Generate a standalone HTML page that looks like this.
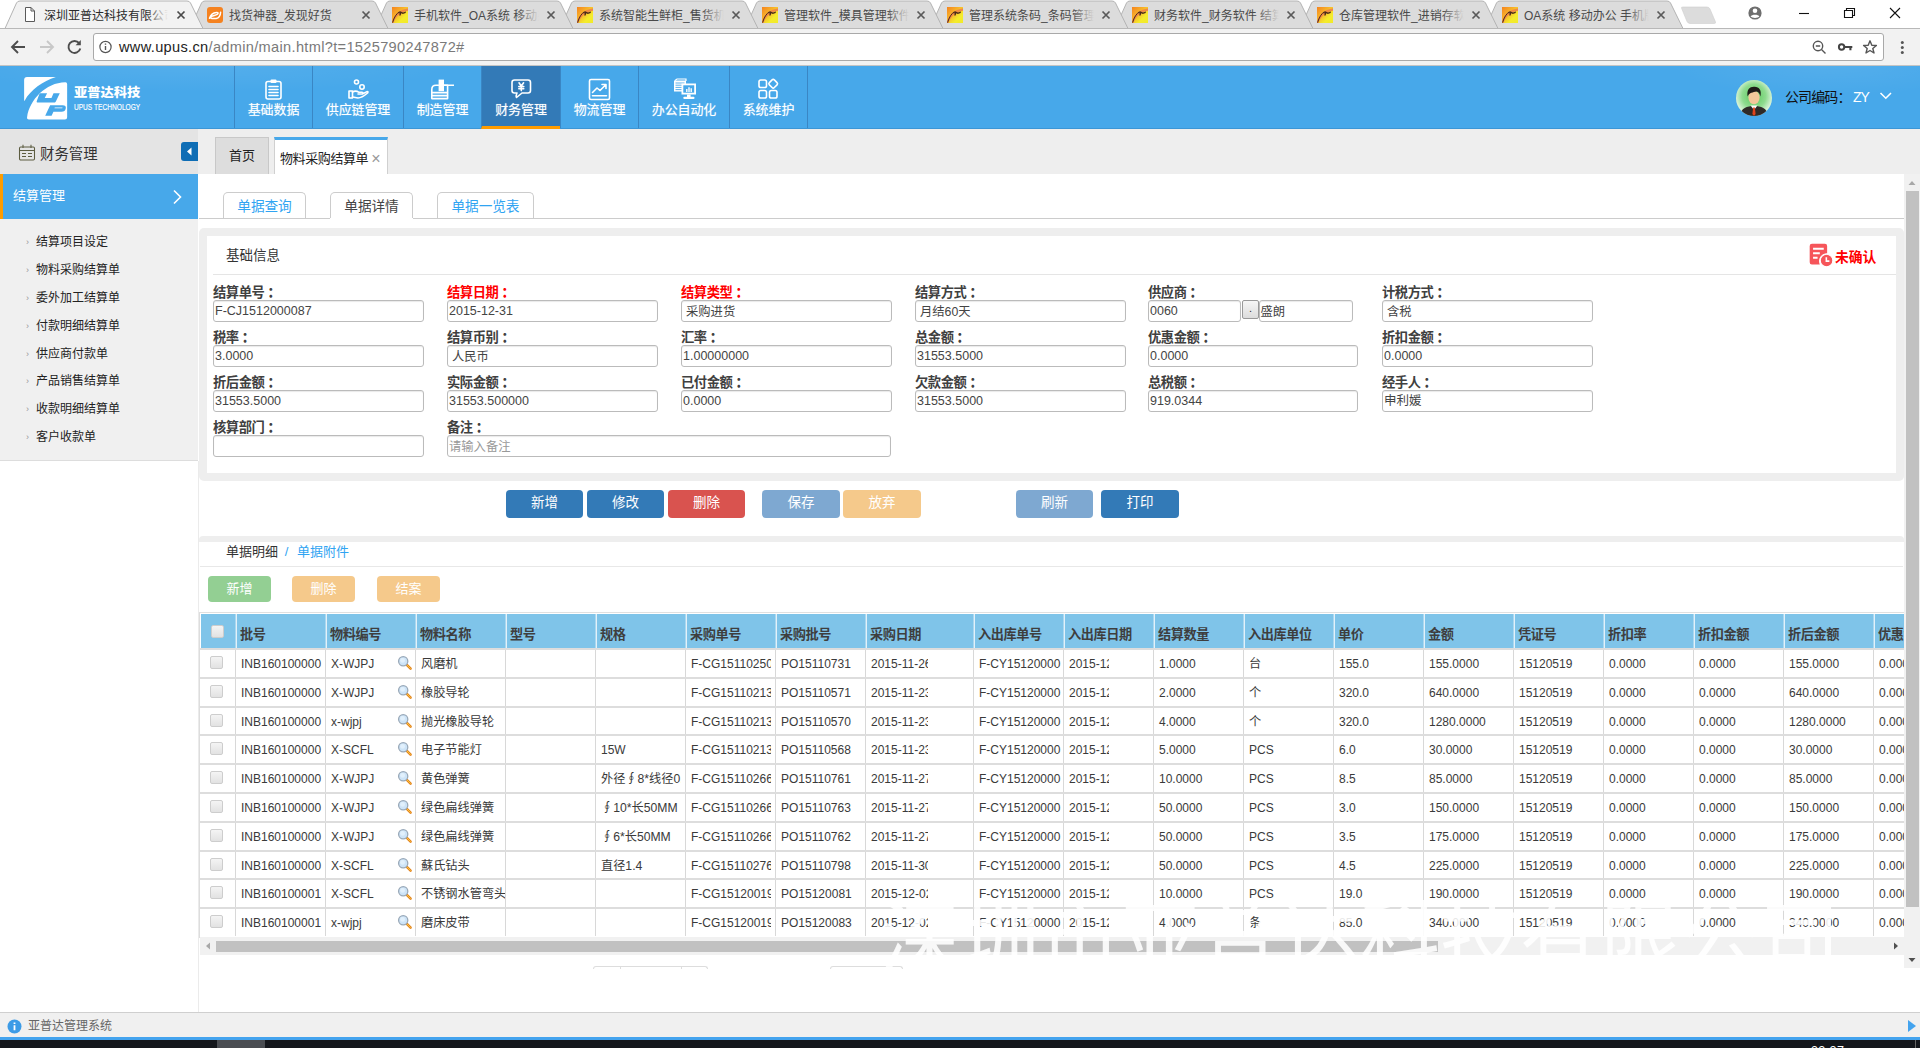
<!DOCTYPE html>
<html lang="zh-CN">
<head>
<meta charset="utf-8">
<title>深圳亚普达科技有限公司</title>
<style>
*{box-sizing:border-box;margin:0;padding:0}
html,body{width:1920px;height:1048px;overflow:hidden;background:#fff}
body{font-family:"Liberation Sans","Noto Sans CJK SC",sans-serif;font-size:12px;color:#333;position:relative}
.abs{position:absolute}
svg{display:block}
/* ---------- browser chrome ---------- */
#tabstrip{position:absolute;left:0;top:0;width:1920px;height:28px;background:#fff}
#tabstrip svg.tabs{position:absolute;left:0;top:0}
.tabt{position:absolute;top:7px;font-size:12px;color:#2b2b2b;white-space:nowrap;overflow:hidden;height:18px;line-height:18px}
.tabt.ina{color:#4a4a4a}
.fade{position:absolute;top:4px;width:22px;height:22px}
#toolbar{position:absolute;left:0;top:28px;width:1920px;height:38px;background:#f2f2f2;border-top:1px solid #b8b8b8;border-bottom:1px solid #c4c4c4}
#omni{position:absolute;left:93px;top:33px;width:1791px;height:28px;background:#fff;border:1px solid #a9a9a9;border-radius:3px}
#url{position:absolute;left:119px;top:37px;font-size:14.6px;line-height:20px;color:#7a7a7a;letter-spacing:.32px}
#url b{font-weight:normal;color:#222}
/* ---------- app header ---------- */
#hdr{position:absolute;left:0;top:66px;width:1920px;height:63px;background:radial-gradient(ellipse 260px 26px at 200px 0,rgba(255,255,255,.07),rgba(255,255,255,0)),radial-gradient(ellipse 160px 30px at 1830px 0,rgba(255,255,255,.07),rgba(255,255,255,0)),#47a8ea;border-bottom:1px solid #3c96d6}
.nav{position:absolute;top:66px;height:62px;border-left:1px solid #3a86c4;color:#fff;font-size:13px;text-align:center;text-shadow:0 0 1px rgba(255,255,255,.55)}
.nav span{position:absolute;left:0;right:0;top:35px;line-height:18px;letter-spacing:-.1px}
.nav svg{position:absolute;left:50%;top:11px;margin-left:-12.5px}
.nav.act{background:#337ab7;border-bottom:3px solid #ff9c00;height:63px}
/* ---------- sidebar ---------- */
#sbhead{position:absolute;left:0;top:129px;width:198px;height:45px;background:#e4e4e4}
#sbhead span{position:absolute;left:40px;top:14.5px;font-size:14.4px;line-height:20px;color:#333}
#collapse{position:absolute;left:181px;top:142px;width:17px;height:19px;background:#0e6db5;border-radius:3px 0 0 3px}
#sbact{position:absolute;left:0;top:174px;width:198px;height:45px;background:#47a8ea;border-left:3px solid #ff9c00;color:#fff;font-size:13px}
#sbact span{position:absolute;left:10px;top:13px;line-height:18px}
#sbmenu{position:absolute;left:0;top:219px;width:198px;height:242px;background:#f0f0f0;border-bottom:1px solid #ddd}
.mi{position:absolute;left:36px;font-size:12px;line-height:16px;margin-top:1px;color:#222;white-space:nowrap}
.mi i{position:absolute;left:-10px;top:0;font-style:normal;color:#999;font-size:9px}
#sbline{position:absolute;left:198px;top:461px;width:1px;height:551px;background:#ebebeb}
/* ---------- page tabs ---------- */
#tabbar{position:absolute;left:198px;top:129px;width:1722px;height:45px;background:#eee}
#tHome{position:absolute;left:215px;top:137px;width:54px;height:37px;background:#ddd;border:1px solid #c8c8c8;border-bottom:none;font-size:13px;text-align:center;line-height:36px;color:#222}
#tAct{position:absolute;left:274px;top:137px;width:114px;height:37px;background:#fff;border:1px solid #d0d0d0;border-top:3px solid #47a8ea;border-bottom:none;font-size:13px;line-height:36px;color:#222;padding-left:5px;white-space:nowrap;letter-spacing:-.4px}
#tAct i{font-style:normal;color:#999;font-size:16px;margin-left:3px;position:relative;top:1px}
.itab{position:absolute;top:192px;height:26px;border:1px solid #ccc;border-bottom:none;border-radius:5px 5px 0 0;font-size:13.7px;line-height:27px;text-align:center;color:#30a4f2;background:#fff;letter-spacing:-.1px}
.itab.on{color:#444;height:26px;box-shadow:0 1px 0 #fff}
#iline{position:absolute;left:199px;top:218px;width:1705px;height:1px;background:#ccc}

/* ---------- form panel ---------- */
#fpanel{position:absolute;left:199px;top:228px;width:1705px;height:253px;background:#eee;border-radius:5px}
#fwhite{position:absolute;left:207px;top:236px;width:1689px;height:237px;background:#fff}
#ftitle{position:absolute;left:226px;top:247px;font-size:13.5px;line-height:18px;color:#333}
#fhr{position:absolute;left:213px;top:274px;width:1683px;height:1px;background:#e5e5e5}
.lb{position:absolute;font-size:13.3px;font-weight:bold;line-height:16px;color:#404040;white-space:nowrap;letter-spacing:-.45px;margin-top:1px}
.lb b{margin-left:3px}
.lb.red{color:#f00}
.in{position:absolute;height:22px;border:1px solid #bbb;border-radius:3px;background:#fff;font-size:12.5px;line-height:20px;padding-left:1px;color:#444;white-space:nowrap;overflow:hidden;box-shadow:inset 0 1px 1px rgba(0,0,0,.09)}
.in.cj{padding-left:4px;font-size:12.3px;line-height:22px}
.in.ph{color:#999;padding-left:1px;font-size:12.3px;line-height:22px}
#unconf{position:absolute;left:1835px;top:248.5px;font-size:13.8px;font-weight:bold;color:#f00;line-height:18px;white-space:nowrap}
.btn{position:absolute;top:490px;width:77px;height:28px;border-radius:4px;color:#fff;font-size:13.5px;text-align:center;line-height:26px}
.sbtn{position:absolute;top:576px;width:63px;height:26px;border-radius:4px;color:#fff;font-size:13px;text-align:center;line-height:25px}
#band{position:absolute;left:199px;top:536px;width:1705px;height:6px;background:#eee;border-radius:4px 4px 0 0}
#dtitle{position:absolute;left:226px;top:543px;font-size:13px;line-height:18px;color:#333;white-space:nowrap}
#dtitle i{font-style:normal;color:#30a4f2}
#dhr{position:absolute;left:200px;top:566px;width:1703px;height:1px;background:#e8e8e8}
#dleft{position:absolute;left:199px;top:541px;width:1px;height:72px;background:#e8e8e8}
/* ---------- grid ---------- */
#grid{position:absolute;left:199px;top:612px;width:1705px;height:326px;overflow:hidden;border-left:1px solid #ddd;border-top:1px solid #e0e0e0;background:#fff}
#gin{position:absolute;left:0;top:1px;width:1800px;height:330px}
#ghead{position:absolute;left:0;top:0;height:34px;width:1800px;background:#7fc4e9}
.th{position:absolute;top:0;height:34px;border-left:1px solid #e2f1fa;box-shadow:-1px 0 0 rgba(255,255,255,.35);font-size:13.2px;font-weight:bold;color:#3e3e3e;line-height:41.2px;padding-left:3px;letter-spacing:-.45px;white-space:nowrap;overflow:hidden}
.tr{position:absolute;left:0;width:1800px;height:28.8px;border-top:2px solid #ddd}
.td{position:absolute;top:0;height:26.8px;border-left:1px solid #d8d8d8;font-size:12px;color:#3a3a3a;line-height:29.6px;padding-left:5px;white-space:nowrap;overflow:hidden}
.td.cj{font-size:12.2px;line-height:29.4px}
.cb{position:absolute;left:11px;width:13px;height:13px;border:1px solid #cdcdcd;border-radius:2px;background:linear-gradient(#f4f4f4,#e2e2e2)}
.mag{position:absolute;left:71px;top:5px}
.clip{display:inline-block;overflow:hidden;height:26px;vertical-align:top}
/* ---------- scrollbars ---------- */
#vsb{position:absolute;left:1904px;top:174px;width:16px;height:794px;background:#f1f1f1}
#vth{position:absolute;left:1906px;top:191px;width:13px;height:716px;background:#c1c1c1}
#hsb{position:absolute;left:200px;top:937px;width:1704px;height:18px;background:#f1f1f1}
#hth{position:absolute;left:216px;top:941px;width:1222px;height:11px;background:#c1c1c1}
/* ---------- status ---------- */
#status{position:absolute;left:0;top:1012px;width:1920px;height:26px;background:#f0f0f0;border-top:1px solid #cfcfcf}
#status span{position:absolute;left:28px;top:5px;font-size:12px;line-height:17px;color:#666}
#bline{position:absolute;left:0;top:1037px;width:1920px;height:3px;background:#43a3ee}
#taskbar{position:absolute;left:0;top:1040px;width:1920px;height:8px;background:#14171c;overflow:hidden}
#wm{position:absolute;left:880px;top:900px;width:1000px;height:69px;overflow:hidden;font-size:80px;line-height:80px;color:rgba(255,255,255,.88);white-space:nowrap;font-weight:400;letter-spacing:0;pointer-events:none}
</style>
</head>
<body>
<div id="tabstrip">
<svg class="tabs" width="1920" height="30" viewBox="0 0 1920 30"><path d="M1485 28.5 L1496.5 3 Q1497.5 1 1500 1 L1667 1 Q1669.5 1 1670.5 3 L1683 28.5 Z" fill="#dcdcdc" stroke="#b4b4b4" stroke-width="1"/><path d="M1300 28.5 L1311.5 3 Q1312.5 1 1315 1 L1482 1 Q1484.5 1 1485.5 3 L1498 28.5 Z" fill="#dcdcdc" stroke="#b4b4b4" stroke-width="1"/><path d="M1115 28.5 L1126.5 3 Q1127.5 1 1130 1 L1297 1 Q1299.5 1 1300.5 3 L1313 28.5 Z" fill="#dcdcdc" stroke="#b4b4b4" stroke-width="1"/><path d="M930 28.5 L941.5 3 Q942.5 1 945 1 L1112 1 Q1114.5 1 1115.5 3 L1128 28.5 Z" fill="#dcdcdc" stroke="#b4b4b4" stroke-width="1"/><path d="M745 28.5 L756.5 3 Q757.5 1 760 1 L927 1 Q929.5 1 930.5 3 L943 28.5 Z" fill="#dcdcdc" stroke="#b4b4b4" stroke-width="1"/><path d="M560 28.5 L571.5 3 Q572.5 1 575 1 L742 1 Q744.5 1 745.5 3 L758 28.5 Z" fill="#dcdcdc" stroke="#b4b4b4" stroke-width="1"/><path d="M375 28.5 L386.5 3 Q387.5 1 390 1 L557 1 Q559.5 1 560.5 3 L573 28.5 Z" fill="#dcdcdc" stroke="#b4b4b4" stroke-width="1"/><path d="M190 28.5 L201.5 3 Q202.5 1 205 1 L372 1 Q374.5 1 375.5 3 L388 28.5 Z" fill="#dcdcdc" stroke="#b4b4b4" stroke-width="1"/><path d="M1681.5 8 Q1681 7 1683 7 L1707 7 Q1709 7 1710 9 L1715.5 22 Q1716 23.5 1714 23.5 L1690 23.5 Q1688 23.5 1687 21.5 Z" fill="#dcdcdc" stroke="#cfcfcf" stroke-width=".6"/><path d="M5 28.5 L16.5 3 Q17.5 1 20 1 L187 1 Q189.5 1 190.5 3 L203 28.5 Z" fill="#f2f2f2" stroke="#b4b4b4" stroke-width="1"/><rect x="6" y="28" width="196.5" height="1.5" fill="#f2f2f2"/><path d="M177.5 11.5 L184.5 18.5 M184.5 11.5 L177.5 18.5" stroke="#4a4a4a" stroke-width="1.7" fill="none"/><path d="M362.5 11.5 L369.5 18.5 M369.5 11.5 L362.5 18.5" stroke="#5a5a5a" stroke-width="1.7" fill="none"/><path d="M547.5 11.5 L554.5 18.5 M554.5 11.5 L547.5 18.5" stroke="#5a5a5a" stroke-width="1.7" fill="none"/><path d="M732.5 11.5 L739.5 18.5 M739.5 11.5 L732.5 18.5" stroke="#5a5a5a" stroke-width="1.7" fill="none"/><path d="M917.5 11.5 L924.5 18.5 M924.5 11.5 L917.5 18.5" stroke="#5a5a5a" stroke-width="1.7" fill="none"/><path d="M1102.5 11.5 L1109.5 18.5 M1109.5 11.5 L1102.5 18.5" stroke="#5a5a5a" stroke-width="1.7" fill="none"/><path d="M1287.5 11.5 L1294.5 18.5 M1294.5 11.5 L1287.5 18.5" stroke="#5a5a5a" stroke-width="1.7" fill="none"/><path d="M1472.5 11.5 L1479.5 18.5 M1479.5 11.5 L1472.5 18.5" stroke="#5a5a5a" stroke-width="1.7" fill="none"/><path d="M1657.5 11.5 L1664.5 18.5 M1664.5 11.5 L1657.5 18.5" stroke="#5a5a5a" stroke-width="1.7" fill="none"/><path d="M25.5 7.5 L31 7.5 L34.5 11 L34.5 21.5 L25.5 21.5 Z M31 7.5 L31 11 L34.5 11" fill="#fff" stroke="#5a5a5a" stroke-width="1"/><rect x="207" y="7" width="16" height="16" rx="3" fill="#f58220"/><path d="M209.5 18.2 C210.5 15 213.5 12.6 216.5 12.4 C218.3 12.3 218.6 13.6 217.2 14.4 C215.6 15.3 213.2 15.6 211.6 16.4 C210.3 17.2 210.6 18.6 212.2 18.6 L216.5 18.4 M216.2 18.4 C218.6 18 220.4 15.6 220.6 12.2" stroke="#fff" stroke-width="1.5" fill="none" stroke-linecap="round"/><defs><linearGradient id="fg" x1="0" y1="0" x2="1" y2="1"><stop offset="0" stop-color="#f5821f"/><stop offset=".38" stop-color="#f7b32a"/><stop offset=".7" stop-color="#f4ec2c"/><stop offset="1" stop-color="#f1e92a"/></linearGradient></defs><rect x="392" y="7" width="16" height="16" fill="url(#fg)"/><path d="M392 21 C394.5 14 400 9.5 408 8.2 L408 10.8 C401 12 396 16 393.5 23 L392 23 Z" fill="#f08a45"/><path d="M392.6 22.6 C394 17.5 396.5 13.5 399.5 11.6" stroke="#4a2a1a" stroke-width="1" fill="none"/><path d="M398.2 13.4 L400.2 11.2 L403 12.6 L406 11.6 L405.6 13 L402.8 13.9 L401.2 13.2 L400.6 15.4 L399.2 15.6 L399.8 13.2 Z" fill="#4a2a1a"/><rect x="577" y="7" width="16" height="16" fill="url(#fg)"/><path d="M577 21 C579.5 14 585 9.5 593 8.2 L593 10.8 C586 12 581 16 578.5 23 L577 23 Z" fill="#f08a45"/><path d="M577.6 22.6 C579 17.5 581.5 13.5 584.5 11.6" stroke="#4a2a1a" stroke-width="1" fill="none"/><path d="M583.2 13.4 L585.2 11.2 L588 12.6 L591 11.6 L590.6 13 L587.8 13.9 L586.2 13.2 L585.6 15.4 L584.2 15.6 L584.8 13.2 Z" fill="#4a2a1a"/><rect x="762" y="7" width="16" height="16" fill="url(#fg)"/><path d="M762 21 C764.5 14 770 9.5 778 8.2 L778 10.8 C771 12 766 16 763.5 23 L762 23 Z" fill="#f08a45"/><path d="M762.6 22.6 C764 17.5 766.5 13.5 769.5 11.6" stroke="#4a2a1a" stroke-width="1" fill="none"/><path d="M768.2 13.4 L770.2 11.2 L773 12.6 L776 11.6 L775.6 13 L772.8 13.9 L771.2 13.2 L770.6 15.4 L769.2 15.6 L769.8 13.2 Z" fill="#4a2a1a"/><rect x="947" y="7" width="16" height="16" fill="url(#fg)"/><path d="M947 21 C949.5 14 955 9.5 963 8.2 L963 10.8 C956 12 951 16 948.5 23 L947 23 Z" fill="#f08a45"/><path d="M947.6 22.6 C949 17.5 951.5 13.5 954.5 11.6" stroke="#4a2a1a" stroke-width="1" fill="none"/><path d="M953.2 13.4 L955.2 11.2 L958 12.6 L961 11.6 L960.6 13 L957.8 13.9 L956.2 13.2 L955.6 15.4 L954.2 15.6 L954.8 13.2 Z" fill="#4a2a1a"/><rect x="1132" y="7" width="16" height="16" fill="url(#fg)"/><path d="M1132 21 C1134.5 14 1140 9.5 1148 8.2 L1148 10.8 C1141 12 1136 16 1133.5 23 L1132 23 Z" fill="#f08a45"/><path d="M1132.6 22.6 C1134 17.5 1136.5 13.5 1139.5 11.6" stroke="#4a2a1a" stroke-width="1" fill="none"/><path d="M1138.2 13.4 L1140.2 11.2 L1143 12.6 L1146 11.6 L1145.6 13 L1142.8 13.9 L1141.2 13.2 L1140.6 15.4 L1139.2 15.6 L1139.8 13.2 Z" fill="#4a2a1a"/><rect x="1317" y="7" width="16" height="16" fill="url(#fg)"/><path d="M1317 21 C1319.5 14 1325 9.5 1333 8.2 L1333 10.8 C1326 12 1321 16 1318.5 23 L1317 23 Z" fill="#f08a45"/><path d="M1317.6 22.6 C1319 17.5 1321.5 13.5 1324.5 11.6" stroke="#4a2a1a" stroke-width="1" fill="none"/><path d="M1323.2 13.4 L1325.2 11.2 L1328 12.6 L1331 11.6 L1330.6 13 L1327.8 13.9 L1326.2 13.2 L1325.6 15.4 L1324.2 15.6 L1324.8 13.2 Z" fill="#4a2a1a"/><rect x="1502" y="7" width="16" height="16" fill="url(#fg)"/><path d="M1502 21 C1504.5 14 1510 9.5 1518 8.2 L1518 10.8 C1511 12 1506 16 1503.5 23 L1502 23 Z" fill="#f08a45"/><path d="M1502.6 22.6 C1504 17.5 1506.5 13.5 1509.5 11.6" stroke="#4a2a1a" stroke-width="1" fill="none"/><path d="M1508.2 13.4 L1510.2 11.2 L1513 12.6 L1516 11.6 L1515.6 13 L1512.8 13.9 L1511.2 13.2 L1510.6 15.4 L1509.2 15.6 L1509.8 13.2 Z" fill="#4a2a1a"/><circle cx="1755" cy="13" r="6.6" fill="#6e6e6e"/><circle cx="1755" cy="10.8" r="2.3" fill="#fff"/><path d="M1750.6 16.6 C1751.5 14.2 1758.5 14.2 1759.4 16.6 C1758 18.3 1752 18.3 1750.6 16.6 Z" fill="#fff"/><path d="M1799 13.5 L1809 13.5" stroke="#111" stroke-width="1.1"/><path d="M1844.5 10.5 H1852.5 V17.5 H1844.5 Z M1846.5 10.5 V8.5 H1854.5 V15.5 H1852.5" stroke="#111" stroke-width="1.1" fill="none"/><path d="M1890 8 L1900 18 M1900 8 L1890 18" stroke="#111" stroke-width="1.1"/></svg>
<div class="tabt" style="left:44px;width:124px">深圳亚普达科技有限公司</div>
<div class="fade" style="left:146px;background:linear-gradient(90deg,rgba(242,242,242,0),#f2f2f2)"></div>
<div class="tabt ina" style="left:229px;width:125px">找货神器_发现好货</div>
<div class="tabt ina" style="left:414px;width:125px">手机软件_OA系统 移动办</div>
<div class="fade" style="left:517px;background:linear-gradient(90deg,rgba(220,220,220,0),#dcdcdc)"></div>
<div class="tabt ina" style="left:599px;width:125px">系统智能生鲜柜_售货机</div>
<div class="fade" style="left:702px;background:linear-gradient(90deg,rgba(220,220,220,0),#dcdcdc)"></div>
<div class="tabt ina" style="left:784px;width:125px">管理软件_模具管理软件</div>
<div class="fade" style="left:887px;background:linear-gradient(90deg,rgba(220,220,220,0),#dcdcdc)"></div>
<div class="tabt ina" style="left:969px;width:125px">管理系统条码_条码管理</div>
<div class="fade" style="left:1072px;background:linear-gradient(90deg,rgba(220,220,220,0),#dcdcdc)"></div>
<div class="tabt ina" style="left:1154px;width:125px">财务软件_财务软件 结算</div>
<div class="fade" style="left:1257px;background:linear-gradient(90deg,rgba(220,220,220,0),#dcdcdc)"></div>
<div class="tabt ina" style="left:1339px;width:125px">仓库管理软件_进销存软</div>
<div class="fade" style="left:1442px;background:linear-gradient(90deg,rgba(220,220,220,0),#dcdcdc)"></div>
<div class="tabt ina" style="left:1524px;width:125px">OA系统 移动办公 手机版</div>
<div class="fade" style="left:1627px;background:linear-gradient(90deg,rgba(220,220,220,0),#dcdcdc)"></div>
</div>
<div id="toolbar"></div><div id="omni"></div>
<svg class="abs" style="left:0;top:30px" width="1920" height="36" viewBox="0 30 1920 36"><path d="M12 47 H25 M18 41 L12 47 L18 53" stroke="#4d4d4d" stroke-width="1.9" fill="none"/><path d="M40 47 H53 M47 41 L53 47 L47 53" stroke="#c8c8c8" stroke-width="1.9" fill="none"/><path d="M79.2 43.2 A6 6 0 1 0 80.3 48.5" stroke="#4d4d4d" stroke-width="1.9" fill="none"/><path d="M80.8 40 V45.2 H75.6 Z" fill="#4d4d4d"/><circle cx="105.5" cy="47" r="5.6" stroke="#555" stroke-width="1.2" fill="none"/><path d="M105.5 46 V50 M105.5 43.6 V44.8" stroke="#555" stroke-width="1.4"/><circle cx="1818" cy="46" r="4.7" stroke="#555" stroke-width="1.4" fill="none"/><path d="M1815.8 46 H1820.2 M1821.5 49.5 L1825.5 53.5" stroke="#555" stroke-width="1.4"/><circle cx="1841.6" cy="47" r="2.7" stroke="#444" stroke-width="2" fill="none"/><path d="M1844.5 47 H1852.3 M1850.4 47 V50.2" stroke="#444" stroke-width="2.1"/><path d="M1870 40.8 L1871.8 45.2 L1876.4 45.5 L1872.8 48.5 L1874 53 L1870 50.5 L1866 53 L1867.2 48.5 L1863.6 45.5 L1868.2 45.2 Z" stroke="#555" stroke-width="1.4" fill="none" stroke-linejoin="round"/><circle cx="1902.3" cy="42.6" r="1.5" fill="#555"/><circle cx="1902.3" cy="47.5" r="1.5" fill="#555"/><circle cx="1902.3" cy="52.4" r="1.5" fill="#555"/></svg>
<div id="url"><b>www.upus.cn</b>/admin/main.html?t=1525790247872#</div>
<div id="hdr"></div>
<svg class="abs" style="left:15px;top:68px" width="140" height="60" viewBox="0 0 1920 823"><path d="M125 165 Q125 125 165 125 L560 125 C380 185 215 300 132 448 L125 448 Z" fill="#fff"/><path d="M715 220 Q715 195 690 196 C420 200 200 440 166 672 Q158 705 192 705 L685 705 Q715 705 715 675 Z" fill="#fff"/><path d="M338 348 L440 348 L408 410 L500 410 L528 348 L614 348 L560 458 Q552 474 530 474 L318 474 Q288 474 300 448 Z" fill="#47a8ea"/><path d="M482 510 L652 510 Q706 510 696 556 Q687 601 638 601 L527 601 L502 656 L414 656 Z M546 541 L541 553 L648 553 L652 541 Z" fill="#47a8ea" fill-rule="evenodd"/><text x="808" y="396" font-family="'Liberation Sans','Noto Sans CJK SC',sans-serif" font-weight="900" font-size="164" fill="#fff" textLength="912" lengthAdjust="spacingAndGlyphs">亚普达科技</text><text x="808" y="581" font-family="'Liberation Sans',sans-serif" font-weight="normal" font-size="113" fill="#fff" stroke="#fff" stroke-width="2" textLength="910" lengthAdjust="spacingAndGlyphs">UPUS TECHNOLOGY</text></svg>
<div class="nav" style="left:234px;width:78px"><svg width="24" height="24" viewBox="0 0 24 24"><rect x="5" y="4.5" width="15" height="17.5" rx="2" stroke="#fff" stroke-width="1.6" fill="none" stroke-linecap="round" stroke-linejoin="round"/><rect x="9.5" y="2.5" width="6" height="3.5" rx="1" fill="#fff" stroke="none"/><path d="M8 9.5 H17 M8 12.5 H17 M8 15.5 H17 M8 18.5 H17" stroke="#fff" stroke-width="1.6" fill="none" stroke-linecap="round" stroke-linejoin="round" stroke-width="1.3"/></svg><span>基础数据</span></div>
<div class="nav" style="left:312px;width:91px"><svg width="24" height="24" viewBox="0 0 24 24"><circle cx="10.5" cy="5" r="2" stroke="#fff" stroke-width="1.6" fill="none" stroke-linecap="round" stroke-linejoin="round" stroke-width="1.4"/><circle cx="16" cy="10" r="2.2" stroke="#fff" stroke-width="1.6" fill="none" stroke-linecap="round" stroke-linejoin="round" stroke-width="1.4"/><path d="M3 14 H6.5 V21 H3 Z" stroke="#fff" stroke-width="1.6" fill="none" stroke-linecap="round" stroke-linejoin="round" stroke-width="1.4"/><path d="M6.5 15 C9 13.5 11 14 13 15.3 H16 Q17.5 15.6 16.5 17 H12 M16.8 16.8 L21 14.6 Q22.6 14.5 21.6 16 C18 19 15 21 12 21 L6.5 20" stroke="#fff" stroke-width="1.6" fill="none" stroke-linecap="round" stroke-linejoin="round" stroke-width="1.4"/></svg><span>供应链管理</span></div>
<div class="nav" style="left:403px;width:78px"><svg width="24" height="24" viewBox="0 0 24 24"><path d="M8.5 8.3 H6 Q1.8 8.3 1.8 12.5 V21.6 H17.6 V8.3 H14" stroke="#fff" stroke-width="1.6" fill="none" stroke-linecap="round" stroke-linejoin="round" stroke-width="1.5"/><rect x="8.6" y="2.6" width="5.4" height="11.6" fill="#fff"/><path d="M14 8.3 H23.6" stroke="#fff" stroke-width="1.6" fill="none" stroke-linecap="round" stroke-linejoin="round" stroke-width="1.7"/><path d="M2 15.6 H17.4 M2 18.6 H17.4" stroke="#fff" stroke-width="1.6" fill="none" stroke-linecap="round" stroke-linejoin="round" stroke-width="1.3"/></svg><span>制造管理</span></div>
<div class="nav act" style="left:481px;width:79px"><svg width="24" height="24" viewBox="0 0 24 24"><path d="M5.5 3 H19 Q21.5 3 21.5 5.5 V13.5 Q21.5 16 19 16 H13 L7.5 20.5 Q6.5 19 8 16 H5.5 Q3 16 3 13.5 V5.5 Q3 3 5.5 3 Z" stroke="#fff" stroke-width="1.6" fill="none" stroke-linecap="round" stroke-linejoin="round"/><path d="M10 5.8 L12.3 9 L14.6 5.8 M12.3 9 V13.6 M9.8 9.6 H14.8 M9.8 11.8 H14.8" stroke="#fff" stroke-width="1.6" fill="none" stroke-linecap="round" stroke-linejoin="round" stroke-width="1.3"/></svg><span>财务管理</span></div>
<div class="nav" style="left:560px;width:78px"><svg width="24" height="24" viewBox="0 0 24 24"><rect x="2.5" y="2.5" width="20" height="20" rx="1.5" stroke="#fff" stroke-width="1.6" fill="none" stroke-linecap="round" stroke-linejoin="round"/><path d="M5.5 15.5 L10 11 L13 13.5 L18.5 8 M15 7.5 H19 V11.5" stroke="#fff" stroke-width="1.6" fill="none" stroke-linecap="round" stroke-linejoin="round" stroke-width="1.4"/><path d="M5.5 18.8 H19.5" stroke="#fff" stroke-width="1.6" fill="none" stroke-linecap="round" stroke-linejoin="round" stroke-width="1.4"/></svg><span>物流管理</span></div>
<div class="nav" style="left:638px;width:91px"><svg width="26" height="24" viewBox="0 0 26 24"><path d="M3 3.5 L5 2 H14 V4" stroke="#fff" stroke-width="1.2" fill="none"/><rect x="2" y="3.5" width="12" height="11" fill="#fff"/><path d="M3.5 6 H12.5 M3.5 8.2 H12.5 M3.5 10.4 H12.5 M3.5 12.6 H12.5" stroke="#47a8ea" stroke-width=".9"/><rect x="9.5" y="6.5" width="14.5" height="11" fill="#fff"/><rect x="11.3" y="8.3" width="10.9" height="7.4" fill="#47a8ea"/><path d="M17 15 V10.3 M14.8 15 V12 M19.2 15 V11.2" stroke="#fff" stroke-width="1.4"/><rect x="15" y="17.5" width="3.6" height="2.6" fill="#fff"/><rect x="11.3" y="19.8" width="11.2" height="2.2" rx="1" fill="#fff"/></svg><span>办公自动化</span></div>
<div class="nav" style="left:729px;width:78px"><svg width="24" height="24" viewBox="0 0 24 24"><rect x="3" y="3" width="7.5" height="7.5" rx="1.8" stroke="#fff" stroke-width="1.6" fill="none" stroke-linecap="round" stroke-linejoin="round"/><rect x="3" y="13.5" width="7.5" height="7.5" rx="1.8" stroke="#fff" stroke-width="1.6" fill="none" stroke-linecap="round" stroke-linejoin="round"/><rect x="13.5" y="13.5" width="7.5" height="7.5" rx="1.8" stroke="#fff" stroke-width="1.6" fill="none" stroke-linecap="round" stroke-linejoin="round"/><rect x="13.7" y="3.2" width="7" height="7" rx="1.6" transform="rotate(45 17.2 6.7)" stroke="#fff" stroke-width="1.6" fill="none" stroke-linecap="round" stroke-linejoin="round"/></svg><span>系统维护</span></div>
<div class="nav" style="left:807px;width:1px"></div>
<svg class="abs" style="left:1735px;top:79px" width="38" height="38" viewBox="0 0 38 38"><defs><radialGradient id="av" cx=".5" cy=".45" r=".55"><stop offset="0" stop-color="#58c85a"/><stop offset=".6" stop-color="#8fdb8f"/><stop offset="1" stop-color="#e8f8e6"/></radialGradient><clipPath id="avc"><circle cx="19" cy="19" r="18"/></clipPath></defs><circle cx="19" cy="19" r="18" fill="url(#av)"/><g clip-path="url(#avc)"><path d="M5 38 C5 29 12 27 19 27 C26 27 33 29 33 38 Z" fill="#2f2a28"/><path d="M15.5 26.5 L19 31 L22.5 26.5 Z" fill="#fff"/><path d="M18.2 28.5 H19.8 L20.6 35 L19 37 L17.4 35 Z" fill="#e0431b"/><ellipse cx="19" cy="18.5" rx="5.6" ry="6.8" fill="#f3c79a"/><path d="M12.6 17.5 C11.5 10 15 7.5 19.5 7.8 C24.5 8 26.8 11.5 25.4 17.5 C24.8 14.5 23.5 13 21.5 12.5 C18 13.5 14.5 13.2 12.6 17.5 Z" fill="#1f1a18"/></g></svg>
<div class="abs" style="left:1785px;top:88px;font-size:14px;line-height:18px;color:#111;white-space:nowrap;letter-spacing:-.9px">公司编码：</div>
<div class="abs" style="left:1853px;top:88px;font-size:14px;line-height:18px;color:#fff;letter-spacing:-1px">ZY</div>
<svg class="abs" style="left:1878px;top:90px" width="16" height="12" viewBox="0 0 16 12"><path d="M2.5 3 L7.8 8.2 L13 3" stroke="#fff" stroke-width="1.6" fill="none"/></svg>
<div id="sbhead"><svg class="abs" style="left:18px;top:15px" width="18" height="18" viewBox="0 0 18 18"><rect x="1.5" y="3" width="15" height="13" rx="1.2" stroke="#5c5c40" stroke-width="1.05" fill="none"/><path d="M5 .8 V4 M13 .8 V4 M1.5 6.5 H16.5 M4 9.5 H8 M10 9.5 H14 M4 12.5 H8 M10 12.5 H14" stroke="#5c5c40" stroke-width="1.05"/></svg><span>财务管理</span></div>
<div id="collapse"><svg width="17" height="19" viewBox="0 0 17 19"><path d="M10.5 5.5 V13.5 L6 9.5 Z" fill="#fff"/></svg></div>
<div id="sbact"><span>结算管理</span><svg class="abs" style="left:168px;top:14px" width="12" height="18" viewBox="0 0 12 18"><path d="M3 2.5 L9.5 9 L3 15.5" stroke="#fff" stroke-width="1.6" fill="none"/></svg></div>
<div id="sbmenu"></div>
<div class="mi" style="top:233px"><i>›</i>结算项目设定</div>
<div class="mi" style="top:261px"><i>›</i>物料采购结算单</div>
<div class="mi" style="top:289px"><i>›</i>委外加工结算单</div>
<div class="mi" style="top:317px"><i>›</i>付款明细结算单</div>
<div class="mi" style="top:345px"><i>›</i>供应商付款单</div>
<div class="mi" style="top:372px"><i>›</i>产品销售结算单</div>
<div class="mi" style="top:400px"><i>›</i>收款明细结算单</div>
<div class="mi" style="top:428px"><i>›</i>客户收款单</div>
<div id="sbline"></div>
<div id="tabbar"></div>
<div id="tHome">首页</div>
<div id="tAct">物料采购结算单<i>×</i></div>
<div class="itab" style="left:223px;width:83px">单据查询</div>
<div id="iline"></div>
<div class="itab on" style="left:330px;width:83px">单据详情</div>
<div class="itab" style="left:437px;width:97px">单据一览表</div>
<div id="fpanel"></div><div id="fwhite"></div>
<div id="ftitle">基础信息</div><div id="fhr"></div>
<svg class="abs" style="left:1807.5px;top:242px" width="27" height="27" viewBox="0 0 24 24"><path d="M3.5 1.5 H15 Q17 1.5 17 3.5 V10 A7 7 0 0 0 10.5 20 H3.5 Q1.5 20 1.5 18 V3.5 Q1.5 1.5 3.5 1.5 Z" fill="#f6555a"/><path d="M4.5 6 H14 M4.5 10 H10.5 M4.5 14 H8.5" stroke="#fff" stroke-width="1.6"/><circle cx="16.5" cy="16.5" r="5.6" fill="#f6555a" stroke="#fff" stroke-width="1"/><path d="M16.3 13.6 V17 H19" stroke="#fff" stroke-width="1.4" fill="none"/></svg>
<div id="unconf">未确认</div>
<div class="lb" style="left:213px;top:284px">结算单号<b>：</b></div>
<div class="in " style="left:213px;top:300px;width:211px">F-CJ1512000087</div>
<div class="lb red" style="left:447px;top:284px">结算日期<b>：</b></div>
<div class="in " style="left:447px;top:300px;width:211px">2015-12-31</div>
<div class="lb red" style="left:681px;top:284px">结算类型<b>：</b></div>
<div class="in cj" style="left:681px;top:300px;width:211px">采购进货</div>
<div class="lb" style="left:915px;top:284px">结算方式<b>：</b></div>
<div class="in cj" style="left:915px;top:300px;width:211px">月结60天</div>
<div class="lb" style="left:1148px;top:284px">供应商<b>：</b></div>
<div class="in" style="left:1148px;top:300px;width:93px">0060</div>
<div class="abs" style="left:1242px;top:300px;width:17px;height:19px;border:1px solid #999;border-radius:2px;background:linear-gradient(#f6f6f6,#dcdcdc);font-size:11px;line-height:15px;text-align:center;color:#333">.</div>
<div class="in" style="left:1259px;top:300px;width:94px;padding-left:.5px;font-size:12.3px;line-height:22px">盛朗</div>
<div class="lb" style="left:1382px;top:284px">计税方式<b>：</b></div>
<div class="in cj" style="left:1382px;top:300px;width:211px">含税</div>
<div class="lb" style="left:213px;top:329px">税率<b>：</b></div>
<div class="in " style="left:213px;top:345px;width:211px">3.0000</div>
<div class="lb" style="left:447px;top:329px">结算币别<b>：</b></div>
<div class="in cj" style="left:447px;top:345px;width:211px">人民币</div>
<div class="lb" style="left:681px;top:329px">汇率<b>：</b></div>
<div class="in " style="left:681px;top:345px;width:211px">1.00000000</div>
<div class="lb" style="left:915px;top:329px">总金额<b>：</b></div>
<div class="in " style="left:915px;top:345px;width:211px">31553.5000</div>
<div class="lb" style="left:1148px;top:329px">优惠金额<b>：</b></div>
<div class="in " style="left:1148px;top:345px;width:210px">0.0000</div>
<div class="lb" style="left:1382px;top:329px">折扣金额<b>：</b></div>
<div class="in " style="left:1382px;top:345px;width:211px">0.0000</div>
<div class="lb" style="left:213px;top:374px">折后金额<b>：</b></div>
<div class="in " style="left:213px;top:390px;width:211px">31553.5000</div>
<div class="lb" style="left:447px;top:374px">实际金额<b>：</b></div>
<div class="in " style="left:447px;top:390px;width:211px">31553.500000</div>
<div class="lb" style="left:681px;top:374px">已付金额<b>：</b></div>
<div class="in " style="left:681px;top:390px;width:211px">0.0000</div>
<div class="lb" style="left:915px;top:374px">欠款金额<b>：</b></div>
<div class="in " style="left:915px;top:390px;width:211px">31553.5000</div>
<div class="lb" style="left:1148px;top:374px">总税额<b>：</b></div>
<div class="in " style="left:1148px;top:390px;width:210px">919.0344</div>
<div class="lb" style="left:1382px;top:374px">经手人<b>：</b></div>
<div class="in " style="left:1382px;top:390px;width:211px">申利媛</div>
<div class="lb" style="left:213px;top:419px">核算部门<b>：</b></div><div class="in" style="left:213px;top:435px;width:211px"></div>
<div class="lb" style="left:447px;top:419px">备注<b>：</b></div><div class="in ph" style="left:447px;top:435px;width:444px">请输入备注</div>
<div class="btn" style="left:506px;width:77px;background:#337ab7">新增</div>
<div class="btn" style="left:587px;width:77px;background:#337ab7">修改</div>
<div class="btn" style="left:668px;width:77px;background:#d9534f">删除</div>
<div class="btn" style="left:762px;width:78px;background:#7ea8d1">保存</div>
<div class="btn" style="left:843px;width:78px;background:#f5c98b">放弃</div>
<div class="btn" style="left:1016px;width:77px;background:#7ea8d1">刷新</div>
<div class="btn" style="left:1101px;width:78px;background:#337ab7">打印</div>
<div id="band"></div>
<div id="dtitle">单据明细 <span style="color:#30a4f2;margin:0 5px 0 3px">/</span> <i>单据附件</i></div><div id="dhr"></div>
<div class="sbtn" style="left:208px;background:#93cf93">新增</div>
<div class="sbtn" style="left:292px;background:#f5c98b">删除</div>
<div class="sbtn" style="left:377px;background:#f5c98b">结案</div>
<div id="grid"><div id="gin"><div id="ghead">
<div class="th" style="left:0px;width:36px;border-left:1px solid #fff;box-shadow:none"><div class="cb" style="top:11px;left:10px"></div></div>
<div class="th" style="left:36px;width:90px">批号</div>
<div class="th" style="left:126px;width:90px">物料编号</div>
<div class="th" style="left:216px;width:90px">物料名称</div>
<div class="th" style="left:306px;width:90px">型号</div>
<div class="th" style="left:396px;width:90px">规格</div>
<div class="th" style="left:486px;width:90px">采购单号</div>
<div class="th" style="left:576px;width:90px">采购批号</div>
<div class="th" style="left:666px;width:108px">采购日期</div>
<div class="th" style="left:774px;width:90px">入出库单号</div>
<div class="th" style="left:864px;width:90px">入出库日期</div>
<div class="th" style="left:954px;width:90px">结算数量</div>
<div class="th" style="left:1044px;width:90px">入出库单位</div>
<div class="th" style="left:1134px;width:90px">单价</div>
<div class="th" style="left:1224px;width:90px">金额</div>
<div class="th" style="left:1314px;width:90px">凭证号</div>
<div class="th" style="left:1404px;width:90px">折扣率</div>
<div class="th" style="left:1494px;width:90px">折扣金额</div>
<div class="th" style="left:1584px;width:90px">折后金额</div>
<div class="th" style="left:1674px;width:90px">优惠金额</div>
</div>
<div class="tr" style="top:34.0px">
<div class="td" style="left:0;width:35px;border-left:none"><div class="cb" style="top:6px;left:10px"></div></div>
<div class="td" style="left:35px;width:90px">INB160100000</div>
<div class="td" style="left:125px;width:90px">X-WJPJ<svg class="mag" width="16" height="16" viewBox="0 0 16 16"><path d="M9.6 9.6 L13.6 13.6" stroke="#e3831f" stroke-width="2.5" stroke-linecap="round"/><path d="M9.9 9.9 L13.4 13.4" stroke="#f7c63a" stroke-width="1" stroke-linecap="round"/><circle cx="6.2" cy="6.2" r="4.6" fill="#cde4f8" stroke="#9aa9b8" stroke-width="1.3"/><circle cx="5.6" cy="5.4" r="2.4" fill="#e6f2fd" opacity=".8"/></svg></div>
<div class="td cj" style="left:215px;width:90px">风磨机</div>
<div class="td" style="left:305px;width:90px"></div>
<div class="td" style="left:395px;width:90px"></div>
<div class="td" style="left:485px;width:90px"><span class="clip" style="width:80px">F-CG15110250</span></div>
<div class="td" style="left:575px;width:90px">PO15110731</div>
<div class="td" style="left:665px;width:108px"><span class="clip" style="width:57px">2015-11-26</span></div>
<div class="td" style="left:773px;width:90px"><span class="clip" style="width:84px">F-CY15120000</span></div>
<div class="td" style="left:863px;width:90px"><span class="clip" style="width:39.6px">2015-12</span></div>
<div class="td" style="left:953px;width:90px">1.0000</div>
<div class="td cj" style="left:1043px;width:90px">台</div>
<div class="td" style="left:1133px;width:90px">155.0</div>
<div class="td" style="left:1223px;width:90px">155.0000</div>
<div class="td" style="left:1313px;width:90px">15120519</div>
<div class="td" style="left:1403px;width:90px">0.0000</div>
<div class="td" style="left:1493px;width:90px">0.0000</div>
<div class="td" style="left:1583px;width:90px">155.0000</div>
<div class="td" style="left:1673px;width:90px">0.0000</div>
</div>
<div class="tr" style="top:62.8px">
<div class="td" style="left:0;width:35px;border-left:none"><div class="cb" style="top:6px;left:10px"></div></div>
<div class="td" style="left:35px;width:90px">INB160100000</div>
<div class="td" style="left:125px;width:90px">X-WJPJ<svg class="mag" width="16" height="16" viewBox="0 0 16 16"><path d="M9.6 9.6 L13.6 13.6" stroke="#e3831f" stroke-width="2.5" stroke-linecap="round"/><path d="M9.9 9.9 L13.4 13.4" stroke="#f7c63a" stroke-width="1" stroke-linecap="round"/><circle cx="6.2" cy="6.2" r="4.6" fill="#cde4f8" stroke="#9aa9b8" stroke-width="1.3"/><circle cx="5.6" cy="5.4" r="2.4" fill="#e6f2fd" opacity=".8"/></svg></div>
<div class="td cj" style="left:215px;width:90px">橡胶导轮</div>
<div class="td" style="left:305px;width:90px"></div>
<div class="td" style="left:395px;width:90px"></div>
<div class="td" style="left:485px;width:90px"><span class="clip" style="width:80px">F-CG15110213</span></div>
<div class="td" style="left:575px;width:90px">PO15110571</div>
<div class="td" style="left:665px;width:108px"><span class="clip" style="width:57px">2015-11-23</span></div>
<div class="td" style="left:773px;width:90px"><span class="clip" style="width:84px">F-CY15120000</span></div>
<div class="td" style="left:863px;width:90px"><span class="clip" style="width:39.6px">2015-12</span></div>
<div class="td" style="left:953px;width:90px">2.0000</div>
<div class="td cj" style="left:1043px;width:90px">个</div>
<div class="td" style="left:1133px;width:90px">320.0</div>
<div class="td" style="left:1223px;width:90px">640.0000</div>
<div class="td" style="left:1313px;width:90px">15120519</div>
<div class="td" style="left:1403px;width:90px">0.0000</div>
<div class="td" style="left:1493px;width:90px">0.0000</div>
<div class="td" style="left:1583px;width:90px">640.0000</div>
<div class="td" style="left:1673px;width:90px">0.0000</div>
</div>
<div class="tr" style="top:91.6px">
<div class="td" style="left:0;width:35px;border-left:none"><div class="cb" style="top:6px;left:10px"></div></div>
<div class="td" style="left:35px;width:90px">INB160100000</div>
<div class="td" style="left:125px;width:90px">x-wjpj<svg class="mag" width="16" height="16" viewBox="0 0 16 16"><path d="M9.6 9.6 L13.6 13.6" stroke="#e3831f" stroke-width="2.5" stroke-linecap="round"/><path d="M9.9 9.9 L13.4 13.4" stroke="#f7c63a" stroke-width="1" stroke-linecap="round"/><circle cx="6.2" cy="6.2" r="4.6" fill="#cde4f8" stroke="#9aa9b8" stroke-width="1.3"/><circle cx="5.6" cy="5.4" r="2.4" fill="#e6f2fd" opacity=".8"/></svg></div>
<div class="td cj" style="left:215px;width:90px">抛光橡胶导轮</div>
<div class="td" style="left:305px;width:90px"></div>
<div class="td" style="left:395px;width:90px"></div>
<div class="td" style="left:485px;width:90px"><span class="clip" style="width:80px">F-CG15110213</span></div>
<div class="td" style="left:575px;width:90px">PO15110570</div>
<div class="td" style="left:665px;width:108px"><span class="clip" style="width:57px">2015-11-23</span></div>
<div class="td" style="left:773px;width:90px"><span class="clip" style="width:84px">F-CY15120000</span></div>
<div class="td" style="left:863px;width:90px"><span class="clip" style="width:39.6px">2015-12</span></div>
<div class="td" style="left:953px;width:90px">4.0000</div>
<div class="td cj" style="left:1043px;width:90px">个</div>
<div class="td" style="left:1133px;width:90px">320.0</div>
<div class="td" style="left:1223px;width:90px">1280.0000</div>
<div class="td" style="left:1313px;width:90px">15120519</div>
<div class="td" style="left:1403px;width:90px">0.0000</div>
<div class="td" style="left:1493px;width:90px">0.0000</div>
<div class="td" style="left:1583px;width:90px">1280.0000</div>
<div class="td" style="left:1673px;width:90px">0.0000</div>
</div>
<div class="tr" style="top:120.4px">
<div class="td" style="left:0;width:35px;border-left:none"><div class="cb" style="top:6px;left:10px"></div></div>
<div class="td" style="left:35px;width:90px">INB160100000</div>
<div class="td" style="left:125px;width:90px">X-SCFL<svg class="mag" width="16" height="16" viewBox="0 0 16 16"><path d="M9.6 9.6 L13.6 13.6" stroke="#e3831f" stroke-width="2.5" stroke-linecap="round"/><path d="M9.9 9.9 L13.4 13.4" stroke="#f7c63a" stroke-width="1" stroke-linecap="round"/><circle cx="6.2" cy="6.2" r="4.6" fill="#cde4f8" stroke="#9aa9b8" stroke-width="1.3"/><circle cx="5.6" cy="5.4" r="2.4" fill="#e6f2fd" opacity=".8"/></svg></div>
<div class="td cj" style="left:215px;width:90px">电子节能灯</div>
<div class="td" style="left:305px;width:90px"></div>
<div class="td" style="left:395px;width:90px"><span class="clip" style="width:80px">15W</span></div>
<div class="td" style="left:485px;width:90px"><span class="clip" style="width:80px">F-CG15110213</span></div>
<div class="td" style="left:575px;width:90px">PO15110568</div>
<div class="td" style="left:665px;width:108px"><span class="clip" style="width:57px">2015-11-23</span></div>
<div class="td" style="left:773px;width:90px"><span class="clip" style="width:84px">F-CY15120000</span></div>
<div class="td" style="left:863px;width:90px"><span class="clip" style="width:39.6px">2015-12</span></div>
<div class="td" style="left:953px;width:90px">5.0000</div>
<div class="td" style="left:1043px;width:90px">PCS</div>
<div class="td" style="left:1133px;width:90px">6.0</div>
<div class="td" style="left:1223px;width:90px">30.0000</div>
<div class="td" style="left:1313px;width:90px">15120519</div>
<div class="td" style="left:1403px;width:90px">0.0000</div>
<div class="td" style="left:1493px;width:90px">0.0000</div>
<div class="td" style="left:1583px;width:90px">30.0000</div>
<div class="td" style="left:1673px;width:90px">0.0000</div>
</div>
<div class="tr" style="top:149.2px">
<div class="td" style="left:0;width:35px;border-left:none"><div class="cb" style="top:6px;left:10px"></div></div>
<div class="td" style="left:35px;width:90px">INB160100000</div>
<div class="td" style="left:125px;width:90px">X-WJPJ<svg class="mag" width="16" height="16" viewBox="0 0 16 16"><path d="M9.6 9.6 L13.6 13.6" stroke="#e3831f" stroke-width="2.5" stroke-linecap="round"/><path d="M9.9 9.9 L13.4 13.4" stroke="#f7c63a" stroke-width="1" stroke-linecap="round"/><circle cx="6.2" cy="6.2" r="4.6" fill="#cde4f8" stroke="#9aa9b8" stroke-width="1.3"/><circle cx="5.6" cy="5.4" r="2.4" fill="#e6f2fd" opacity=".8"/></svg></div>
<div class="td cj" style="left:215px;width:90px">黄色弹簧</div>
<div class="td" style="left:305px;width:90px"></div>
<div class="td cj" style="left:395px;width:90px"><span class="clip" style="width:80px">外径∮8*线径0.8</span></div>
<div class="td" style="left:485px;width:90px"><span class="clip" style="width:80px">F-CG15110266</span></div>
<div class="td" style="left:575px;width:90px">PO15110761</div>
<div class="td" style="left:665px;width:108px"><span class="clip" style="width:57px">2015-11-27</span></div>
<div class="td" style="left:773px;width:90px"><span class="clip" style="width:84px">F-CY15120000</span></div>
<div class="td" style="left:863px;width:90px"><span class="clip" style="width:39.6px">2015-12</span></div>
<div class="td" style="left:953px;width:90px">10.0000</div>
<div class="td" style="left:1043px;width:90px">PCS</div>
<div class="td" style="left:1133px;width:90px">8.5</div>
<div class="td" style="left:1223px;width:90px">85.0000</div>
<div class="td" style="left:1313px;width:90px">15120519</div>
<div class="td" style="left:1403px;width:90px">0.0000</div>
<div class="td" style="left:1493px;width:90px">0.0000</div>
<div class="td" style="left:1583px;width:90px">85.0000</div>
<div class="td" style="left:1673px;width:90px">0.0000</div>
</div>
<div class="tr" style="top:178.0px">
<div class="td" style="left:0;width:35px;border-left:none"><div class="cb" style="top:6px;left:10px"></div></div>
<div class="td" style="left:35px;width:90px">INB160100000</div>
<div class="td" style="left:125px;width:90px">X-WJPJ<svg class="mag" width="16" height="16" viewBox="0 0 16 16"><path d="M9.6 9.6 L13.6 13.6" stroke="#e3831f" stroke-width="2.5" stroke-linecap="round"/><path d="M9.9 9.9 L13.4 13.4" stroke="#f7c63a" stroke-width="1" stroke-linecap="round"/><circle cx="6.2" cy="6.2" r="4.6" fill="#cde4f8" stroke="#9aa9b8" stroke-width="1.3"/><circle cx="5.6" cy="5.4" r="2.4" fill="#e6f2fd" opacity=".8"/></svg></div>
<div class="td cj" style="left:215px;width:90px">绿色扁线弹簧</div>
<div class="td" style="left:305px;width:90px"></div>
<div class="td cj" style="left:395px;width:90px"><span class="clip" style="width:80px">∮10*长50MM</span></div>
<div class="td" style="left:485px;width:90px"><span class="clip" style="width:80px">F-CG15110266</span></div>
<div class="td" style="left:575px;width:90px">PO15110763</div>
<div class="td" style="left:665px;width:108px"><span class="clip" style="width:57px">2015-11-27</span></div>
<div class="td" style="left:773px;width:90px"><span class="clip" style="width:84px">F-CY15120000</span></div>
<div class="td" style="left:863px;width:90px"><span class="clip" style="width:39.6px">2015-12</span></div>
<div class="td" style="left:953px;width:90px">50.0000</div>
<div class="td" style="left:1043px;width:90px">PCS</div>
<div class="td" style="left:1133px;width:90px">3.0</div>
<div class="td" style="left:1223px;width:90px">150.0000</div>
<div class="td" style="left:1313px;width:90px">15120519</div>
<div class="td" style="left:1403px;width:90px">0.0000</div>
<div class="td" style="left:1493px;width:90px">0.0000</div>
<div class="td" style="left:1583px;width:90px">150.0000</div>
<div class="td" style="left:1673px;width:90px">0.0000</div>
</div>
<div class="tr" style="top:206.8px">
<div class="td" style="left:0;width:35px;border-left:none"><div class="cb" style="top:6px;left:10px"></div></div>
<div class="td" style="left:35px;width:90px">INB160100000</div>
<div class="td" style="left:125px;width:90px">X-WJPJ<svg class="mag" width="16" height="16" viewBox="0 0 16 16"><path d="M9.6 9.6 L13.6 13.6" stroke="#e3831f" stroke-width="2.5" stroke-linecap="round"/><path d="M9.9 9.9 L13.4 13.4" stroke="#f7c63a" stroke-width="1" stroke-linecap="round"/><circle cx="6.2" cy="6.2" r="4.6" fill="#cde4f8" stroke="#9aa9b8" stroke-width="1.3"/><circle cx="5.6" cy="5.4" r="2.4" fill="#e6f2fd" opacity=".8"/></svg></div>
<div class="td cj" style="left:215px;width:90px">绿色扁线弹簧</div>
<div class="td" style="left:305px;width:90px"></div>
<div class="td cj" style="left:395px;width:90px"><span class="clip" style="width:80px">∮6*长50MM</span></div>
<div class="td" style="left:485px;width:90px"><span class="clip" style="width:80px">F-CG15110266</span></div>
<div class="td" style="left:575px;width:90px">PO15110762</div>
<div class="td" style="left:665px;width:108px"><span class="clip" style="width:57px">2015-11-27</span></div>
<div class="td" style="left:773px;width:90px"><span class="clip" style="width:84px">F-CY15120000</span></div>
<div class="td" style="left:863px;width:90px"><span class="clip" style="width:39.6px">2015-12</span></div>
<div class="td" style="left:953px;width:90px">50.0000</div>
<div class="td" style="left:1043px;width:90px">PCS</div>
<div class="td" style="left:1133px;width:90px">3.5</div>
<div class="td" style="left:1223px;width:90px">175.0000</div>
<div class="td" style="left:1313px;width:90px">15120519</div>
<div class="td" style="left:1403px;width:90px">0.0000</div>
<div class="td" style="left:1493px;width:90px">0.0000</div>
<div class="td" style="left:1583px;width:90px">175.0000</div>
<div class="td" style="left:1673px;width:90px">0.0000</div>
</div>
<div class="tr" style="top:235.6px">
<div class="td" style="left:0;width:35px;border-left:none"><div class="cb" style="top:6px;left:10px"></div></div>
<div class="td" style="left:35px;width:90px">INB160100000</div>
<div class="td" style="left:125px;width:90px">X-SCFL<svg class="mag" width="16" height="16" viewBox="0 0 16 16"><path d="M9.6 9.6 L13.6 13.6" stroke="#e3831f" stroke-width="2.5" stroke-linecap="round"/><path d="M9.9 9.9 L13.4 13.4" stroke="#f7c63a" stroke-width="1" stroke-linecap="round"/><circle cx="6.2" cy="6.2" r="4.6" fill="#cde4f8" stroke="#9aa9b8" stroke-width="1.3"/><circle cx="5.6" cy="5.4" r="2.4" fill="#e6f2fd" opacity=".8"/></svg></div>
<div class="td cj" style="left:215px;width:90px">蘇氏钻头</div>
<div class="td" style="left:305px;width:90px"></div>
<div class="td cj" style="left:395px;width:90px"><span class="clip" style="width:80px">直径1.4</span></div>
<div class="td" style="left:485px;width:90px"><span class="clip" style="width:80px">F-CG15110276</span></div>
<div class="td" style="left:575px;width:90px">PO15110798</div>
<div class="td" style="left:665px;width:108px"><span class="clip" style="width:57px">2015-11-30</span></div>
<div class="td" style="left:773px;width:90px"><span class="clip" style="width:84px">F-CY15120000</span></div>
<div class="td" style="left:863px;width:90px"><span class="clip" style="width:39.6px">2015-12</span></div>
<div class="td" style="left:953px;width:90px">50.0000</div>
<div class="td" style="left:1043px;width:90px">PCS</div>
<div class="td" style="left:1133px;width:90px">4.5</div>
<div class="td" style="left:1223px;width:90px">225.0000</div>
<div class="td" style="left:1313px;width:90px">15120519</div>
<div class="td" style="left:1403px;width:90px">0.0000</div>
<div class="td" style="left:1493px;width:90px">0.0000</div>
<div class="td" style="left:1583px;width:90px">225.0000</div>
<div class="td" style="left:1673px;width:90px">0.0000</div>
</div>
<div class="tr" style="top:264.4px">
<div class="td" style="left:0;width:35px;border-left:none"><div class="cb" style="top:6px;left:10px"></div></div>
<div class="td" style="left:35px;width:90px">INB160100001</div>
<div class="td" style="left:125px;width:90px">X-SCFL<svg class="mag" width="16" height="16" viewBox="0 0 16 16"><path d="M9.6 9.6 L13.6 13.6" stroke="#e3831f" stroke-width="2.5" stroke-linecap="round"/><path d="M9.9 9.9 L13.4 13.4" stroke="#f7c63a" stroke-width="1" stroke-linecap="round"/><circle cx="6.2" cy="6.2" r="4.6" fill="#cde4f8" stroke="#9aa9b8" stroke-width="1.3"/><circle cx="5.6" cy="5.4" r="2.4" fill="#e6f2fd" opacity=".8"/></svg></div>
<div class="td cj" style="left:215px;width:90px">不锈钢水管弯头</div>
<div class="td" style="left:305px;width:90px"></div>
<div class="td" style="left:395px;width:90px"></div>
<div class="td" style="left:485px;width:90px"><span class="clip" style="width:80px">F-CG15120019</span></div>
<div class="td" style="left:575px;width:90px">PO15120081</div>
<div class="td" style="left:665px;width:108px"><span class="clip" style="width:57px">2015-12-02</span></div>
<div class="td" style="left:773px;width:90px"><span class="clip" style="width:84px">F-CY15120000</span></div>
<div class="td" style="left:863px;width:90px"><span class="clip" style="width:39.6px">2015-12</span></div>
<div class="td" style="left:953px;width:90px">10.0000</div>
<div class="td" style="left:1043px;width:90px">PCS</div>
<div class="td" style="left:1133px;width:90px">19.0</div>
<div class="td" style="left:1223px;width:90px">190.0000</div>
<div class="td" style="left:1313px;width:90px">15120519</div>
<div class="td" style="left:1403px;width:90px">0.0000</div>
<div class="td" style="left:1493px;width:90px">0.0000</div>
<div class="td" style="left:1583px;width:90px">190.0000</div>
<div class="td" style="left:1673px;width:90px">0.0000</div>
</div>
<div class="tr" style="top:293.2px">
<div class="td" style="left:0;width:35px;border-left:none"><div class="cb" style="top:6px;left:10px"></div></div>
<div class="td" style="left:35px;width:90px">INB160100001</div>
<div class="td" style="left:125px;width:90px">x-wjpj<svg class="mag" width="16" height="16" viewBox="0 0 16 16"><path d="M9.6 9.6 L13.6 13.6" stroke="#e3831f" stroke-width="2.5" stroke-linecap="round"/><path d="M9.9 9.9 L13.4 13.4" stroke="#f7c63a" stroke-width="1" stroke-linecap="round"/><circle cx="6.2" cy="6.2" r="4.6" fill="#cde4f8" stroke="#9aa9b8" stroke-width="1.3"/><circle cx="5.6" cy="5.4" r="2.4" fill="#e6f2fd" opacity=".8"/></svg></div>
<div class="td cj" style="left:215px;width:90px">磨床皮带</div>
<div class="td" style="left:305px;width:90px"></div>
<div class="td" style="left:395px;width:90px"></div>
<div class="td" style="left:485px;width:90px"><span class="clip" style="width:80px">F-CG15120019</span></div>
<div class="td" style="left:575px;width:90px">PO15120083</div>
<div class="td" style="left:665px;width:108px"><span class="clip" style="width:57px">2015-12-02</span></div>
<div class="td" style="left:773px;width:90px"><span class="clip" style="width:84px">F-CY15120000</span></div>
<div class="td" style="left:863px;width:90px"><span class="clip" style="width:39.6px">2015-12</span></div>
<div class="td" style="left:953px;width:90px">4.0000</div>
<div class="td cj" style="left:1043px;width:90px">条</div>
<div class="td" style="left:1133px;width:90px">85.0</div>
<div class="td" style="left:1223px;width:90px">340.0000</div>
<div class="td" style="left:1313px;width:90px">15120519</div>
<div class="td" style="left:1403px;width:90px">0.0000</div>
<div class="td" style="left:1493px;width:90px">0.0000</div>
<div class="td" style="left:1583px;width:90px">340.0000</div>
<div class="td" style="left:1673px;width:90px">0.0000</div>
</div>
</div></div>
<div id="vsb"><svg class="abs" style="left:0;top:4px" width="16" height="10" viewBox="0 0 16 10"><path d="M4.5 7 L8 3 L11.5 7 Z" fill="#a8a8a8"/></svg><svg class="abs" style="left:0;top:781px" width="16" height="10" viewBox="0 0 16 10"><path d="M4.5 3 L8 7 L11.5 3 Z" fill="#505050"/></svg></div><div id="vth"></div>
<div id="hsb"><svg class="abs" style="left:3px;top:4px" width="10" height="10" viewBox="0 0 10 10"><path d="M7 1.5 L3 5 L7 8.5 Z" fill="#a8a8a8"/></svg><svg class="abs" style="left:1691px;top:4px" width="10" height="10" viewBox="0 0 10 10"><path d="M3 1.5 L7 5 L3 8.5 Z" fill="#505050"/></svg></div><div id="hth"></div>
<div class="abs" style="left:593px;top:966px;width:115px;height:3px;border:1px solid #ddd;border-bottom:none;border-radius:3px 3px 0 0"></div>
<div class="abs" style="left:620px;top:966px;width:62px;height:3px;border-left:1px solid #ddd;border-right:1px solid #ddd"></div>
<div class="abs" style="left:830px;top:966px;width:73px;height:3px;border:1px solid #ddd;border-bottom:none;border-radius:3px 3px 0 0"></div>
<div id="wm">深圳市亚普达科技有限公司</div>
<div id="status"><svg class="abs" style="left:7px;top:6px" width="15" height="15" viewBox="0 0 15 15"><circle cx="7.5" cy="7.5" r="7" fill="#3c9be6"/><path d="M7.5 6.3 V11.2 M7.5 3.6 V5" stroke="#fff" stroke-width="1.8"/></svg><span>亚普达管理系统</span><svg class="abs" style="left:1907px;top:6px" width="10" height="14" viewBox="0 0 10 14"><path d="M1 1 L9 7 L1 13 Z" fill="#43a3ee"/></svg></div>
<div id="bline"></div><div id="taskbar"><div class="abs" style="left:217px;top:0;width:48px;height:8px;background:#4a4d52"></div><div class="abs" style="left:1915px;top:0;width:1px;height:8px;background:#666"></div><div class="abs" style="left:1811px;top:4.5px;font-size:12.5px;line-height:12px;color:#fff;letter-spacing:.4px">22:27</div></div>
</body>
</html>
